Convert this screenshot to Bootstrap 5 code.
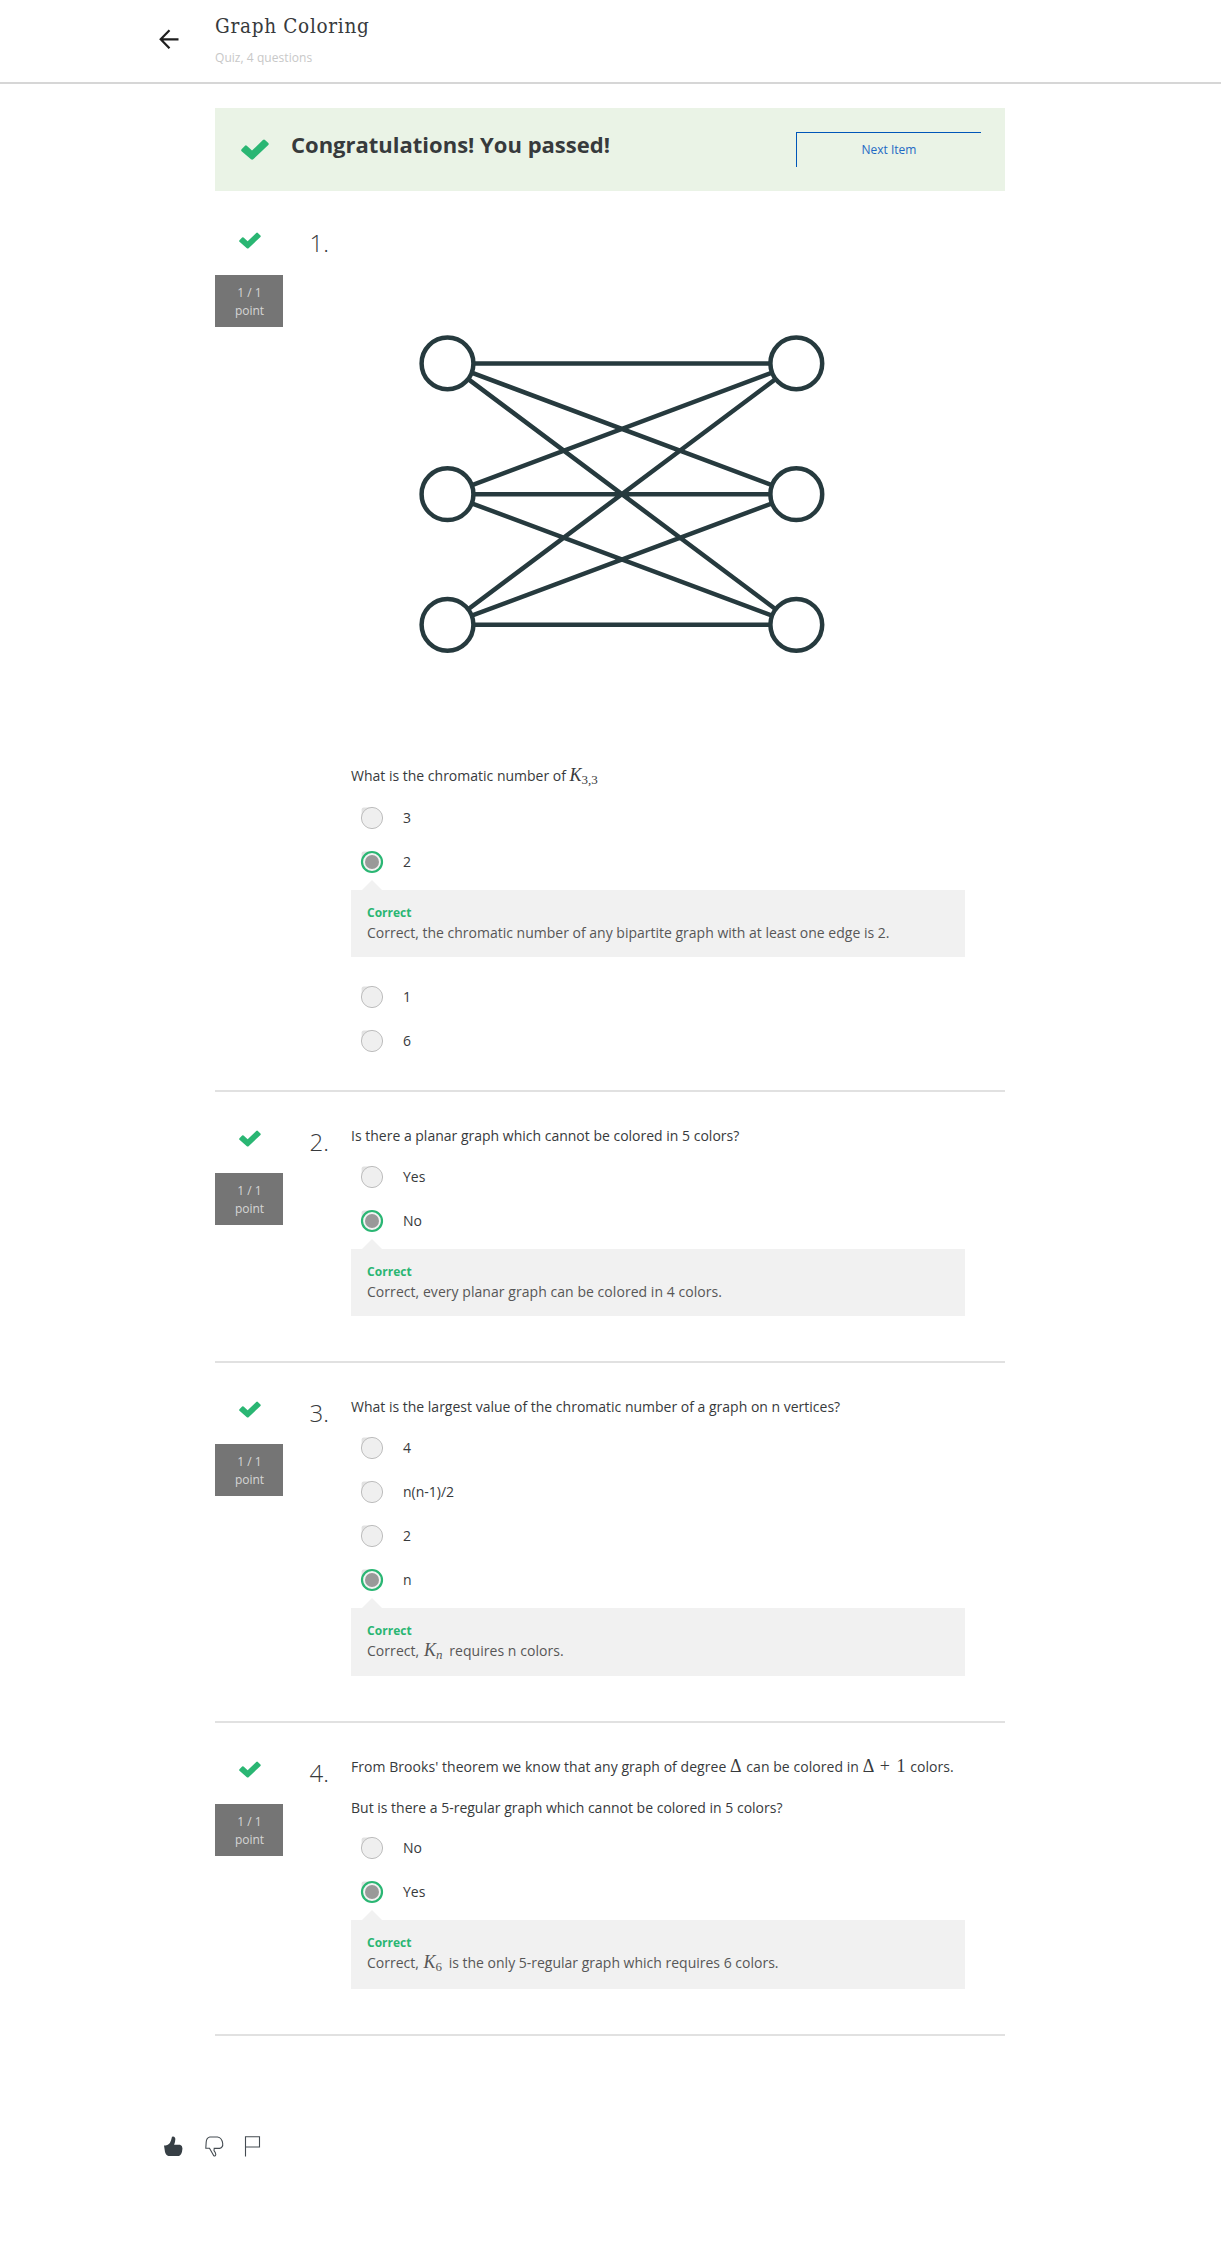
<!DOCTYPE html>
<html lang="en">
<head>
<meta charset="utf-8">
<meta name="viewport" content="width=device-width, initial-scale=1">
<title>Graph Coloring</title>
<link href="https://cdn.jsdelivr.net/npm/bootstrap@5.3.0/dist/css/bootstrap.min.css" rel="stylesheet">
<style>
body{font-family:"Open Sans","Noto Sans",sans-serif;font-size:14px;line-height:21px;color:#373a3c;background:#fff}
.topbar{height:84px;border-bottom:2px solid #d6d6d6;padding-left:159px}
.back{width:20px;margin-top:29px;margin-right:36px}
.q-title{font-family:"DejaVu Serif Condensed","DejaVu Serif",serif;font-size:20.5px;line-height:28px;font-weight:400;margin:12px 0 0;letter-spacing:.7px}
.q-sub{font-size:12px;line-height:18px;color:#c8c8c8;margin-top:9px;letter-spacing:.05px}
.sheet{width:790px;margin-left:215px}
.pass{height:83px;margin-top:24px;background:#eaf3e6;padding:24px 24px 0 26px}
.pass-tick{margin-top:7px}
.pass h2{font-size:22px;line-height:30px;font-weight:700;margin:-3px 0 0 22px}
.next{width:185px;height:35px;border:0;border-top:1px solid #0056b8;border-left:1px solid #0056b8;border-radius:0;color:#1f69c4;font-size:12px;line-height:18px;padding:0;background:none;text-align:center}
.quest{border-bottom:2px solid #e1e1e1;padding-bottom:27px}
.quest-first{margin-top:3px}
.state{width:68px;padding-top:38px}
.state svg{margin-left:24px}
.pts{width:68px;height:52px;margin-top:26px;background:#757575;color:#d6d6d6;font-size:12px;line-height:18px;padding:9px 0 0 1px}
.num{width:68px;padding:32px 22px 0 0;font-size:24px;line-height:36px;font-weight:300}
.quest-first .num{padding-top:31px}
.body-col{width:614px;padding-top:33px}
.ask{margin:0 0 9px}
.quest-first .ask{margin-bottom:10px}
.opt{height:44px;padding:0 0 1px 9px}
.opt svg{margin-right:19px}
.fb{position:relative;background:#f1f1f1;margin:6px 0 18px;height:67px;padding:14px 16px 0;color:#575757}
.fb::before{content:"";position:absolute;left:11px;top:-10px;border:solid transparent;border-width:0 10px 10px;border-bottom-color:#f1f1f1}
.fb b{display:block;font-size:12px;line-height:18px;color:#2ab673}
.fb-68{height:68px}
.fb-69{height:69px}
.loose{letter-spacing:.05px}
.mt{font-family:"Liberation Serif",serif;font-size:18px;line-height:1;margin-right:1px}
.fb .mt{margin:0 3px 0 1px}
.mt sub{font-size:13px;bottom:-.2em}
.mt-wide{word-spacing:2px}
.foot{padding:100px 0 85px 163px}
</style>
</head>
<body>
<svg class="d-none">
 <symbol id="tick" viewBox="0 0 28 21"><path d="M.6 10.2 4 6.7q.9-.9 1.8 0L11 11.6 21.900 1Q23 0 24 .9L27.300 4q.9 1 0 1.900L12.200 20.300q-1.100.9-2.200 0L.6 12.200q-.9-1 0-2z" fill="#2ab673"/></symbol>
 <symbol id="off" viewBox="0 0 24 24"><path d="M1.600 11V3.500q0-2 2-2H11z" fill="#e2e2e2"/><circle cx="12" cy="12" r="10.600" fill="#efefef" stroke="#bdbdbd"/></symbol>
 <symbol id="on" viewBox="0 0 24 24"><path d="M1.600 11V3.500q0-2 2-2H11z" fill="#e2e2e2"/><circle cx="12" cy="12" r="10" fill="#f3f3f3" stroke="#2ab673" stroke-width="2.200"/><circle cx="12" cy="12" r="7" fill="#999"/></symbol>
</svg>
<header class="topbar d-flex align-items-start">
 <svg class="back" width="20" height="20" viewBox="0 0 20 20" fill="none" stroke="#1f1f1f" stroke-width="2.200"><path d="M19.500 10.300H2M10.500 1.200 1.700 10.300l8.800 9"/></svg>
 <div><h1 class="q-title">Graph Coloring</h1><div class="q-sub">Quiz, 4 questions</div></div>
</header>
<main class="sheet">
 <div class="pass d-flex align-items-start">
  <svg class="pass-tick" width="28" height="21"><use href="#tick"/></svg>
  <h2>Congratulations! You passed!</h2>
  <button class="next ms-auto">Next Item</button>
 </div>
 <section class="quest quest-first d-flex">
  <div class="state text-center"><svg class="d-block" width="22" height="17"><use href="#tick"/></svg><div class="pts">1 / 1<br>point</div></div>
  <div class="num text-end">1.</div>
  <div class="body-col">
   <svg class="d-block" width="541" height="538" viewBox="0 -1 541 538" fill="#fff" stroke="#263a3e" stroke-width="4.500"><path fill="none" d="M96.500 135.600H445.300M96.500 266.300H445.300M96.500 396.700H445.300M96.500 135.600 445.300 266.300M96.500 135.600 445.300 396.700M96.500 266.300 445.300 135.600M96.500 266.300 445.300 396.700M96.500 396.700 445.300 135.600M96.500 396.700 445.300 266.300"/><circle cx="96.500" cy="135.400" r="25.900"/><circle cx="96.500" cy="266.200" r="25.900"/><circle cx="96.500" cy="396.800" r="25.900"/><circle cx="445.300" cy="135.400" r="25.900"/><circle cx="445.300" cy="266.200" r="25.900"/><circle cx="445.300" cy="396.800" r="25.900"/></svg>
   <p class="ask">What is the chromatic number of <span class="mt"><i>K</i><sub>3,3</sub></span></p>
   <div class="opt d-flex align-items-center"><svg width="24" height="24"><use href="#off"/></svg>3</div>
   <div class="opt d-flex align-items-center"><svg width="24" height="24"><use href="#on"/></svg>2</div>
   <div class="fb"><b>Correct</b>Correct, the chromatic number of any bipartite graph with at least one edge is 2.</div>
   <div class="opt d-flex align-items-center"><svg width="24" height="24"><use href="#off"/></svg>1</div>
   <div class="opt d-flex align-items-center"><svg width="24" height="24"><use href="#off"/></svg>6</div>
  </div>
 </section>
 <section class="quest d-flex">
  <div class="state text-center"><svg class="d-block" width="22" height="17"><use href="#tick"/></svg><div class="pts">1 / 1<br>point</div></div>
  <div class="num text-end">2.</div>
  <div class="body-col">
   <p class="ask">Is there a planar graph which cannot be colored in 5 colors?</p>
   <div class="opt d-flex align-items-center"><svg width="24" height="24"><use href="#off"/></svg>Yes</div>
   <div class="opt d-flex align-items-center"><svg width="24" height="24"><use href="#on"/></svg>No</div>
   <div class="fb loose"><b>Correct</b>Correct, every planar graph can be colored in 4 colors.</div>
  </div>
 </section>
 <section class="quest d-flex">
  <div class="state text-center"><svg class="d-block" width="22" height="17"><use href="#tick"/></svg><div class="pts">1 / 1<br>point</div></div>
  <div class="num text-end">3.</div>
  <div class="body-col">
   <p class="ask">What is the largest value of the chromatic number of a graph on n vertices?</p>
   <div class="opt d-flex align-items-center"><svg width="24" height="24"><use href="#off"/></svg>4</div>
   <div class="opt d-flex align-items-center"><svg width="24" height="24"><use href="#off"/></svg>n(n-1)/2</div>
   <div class="opt d-flex align-items-center"><svg width="24" height="24"><use href="#off"/></svg>2</div>
   <div class="opt d-flex align-items-center"><svg width="24" height="24"><use href="#on"/></svg>n</div>
   <div class="fb fb-68 loose"><b>Correct</b>Correct, <span class="mt"><i>K<sub>n</sub></i></span> requires n colors.</div>
  </div>
 </section>
 <section class="quest d-flex">
  <div class="state text-center"><svg class="d-block" width="22" height="17"><use href="#tick"/></svg><div class="pts">1 / 1<br>point</div></div>
  <div class="num text-end">4.</div>
  <div class="body-col">
   <p class="ask loose" style="margin-bottom:20px">From Brooks' theorem we know that any graph of degree <span class="mt">Δ</span> can be colored in <span class="mt mt-wide">Δ + 1</span> colors.</p>
   <p class="ask" style="margin-bottom:8px">But is there a 5-regular graph which cannot be colored in 5 colors?</p>
   <div class="opt d-flex align-items-center"><svg width="24" height="24"><use href="#off"/></svg>No</div>
   <div class="opt d-flex align-items-center"><svg width="24" height="24"><use href="#on"/></svg>Yes</div>
   <div class="fb fb-69"><b>Correct</b>Correct, <span class="mt"><i>K</i><sub>6</sub></span> is the only 5-regular graph which requires 6 colors.</div>
  </div>
 </section>
</main>
<footer class="foot d-flex">
 <svg class="me-3" width="20" height="21" viewBox="0 0 20 21" fill="#373f45"><path d="M1 9.500h1.500Q6.500 9 8 4.500L9 .8Q11.500-.3 12.300 2.500q.2 2.500-1.200 6.200H17q2.700 1 2.400 4.300Q19 18.500 16 20H5.500Q3 19.500 2 16z"/></svg>
 <svg class="ms-1" width="22" height="21" viewBox="0 0 22 21" fill="none" stroke="#454c52" stroke-width="1.100"><path d="M2.800 12.200H6.500l4.300 7.600q1.700.7 2-1.300-.2-2-1.800-3.800l.2-2.300h5.500Q20.200 11.500 19.700 7.500 19 1.700 14.500 1H6.800Q3.500 1.700 3.200 6z"/></svg>
 <svg class="ms-3" width="22" height="21" viewBox="0 0 22 21" fill="none" stroke="#454c52" stroke-width="1.100"><path d="M4.500 20.500V.7H18.500V11H4.500"/></svg>
</footer>
<script src="https://cdn.jsdelivr.net/npm/bootstrap@5.3.0/dist/js/bootstrap.bundle.min.js"></script>
</body>
</html>
